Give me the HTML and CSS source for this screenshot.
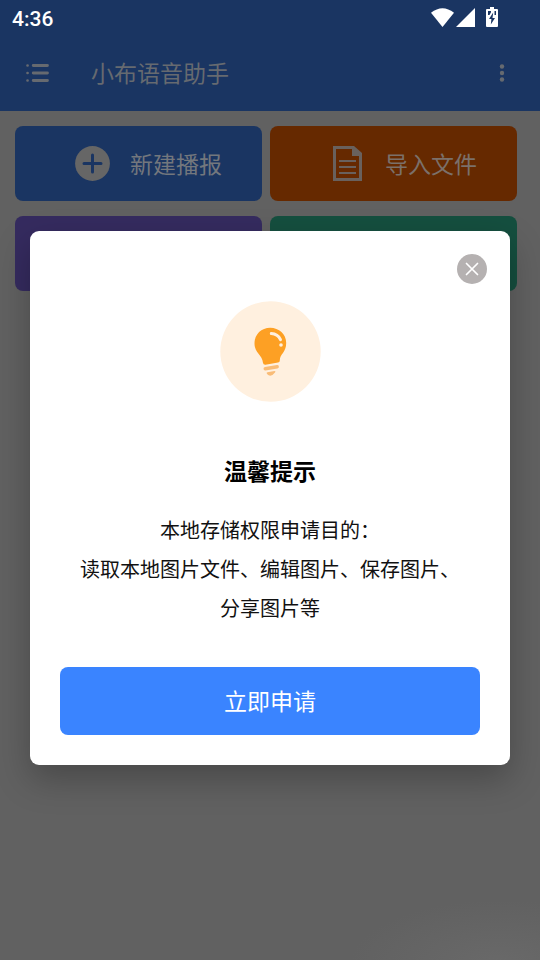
FILE: index.html
```html
<!DOCTYPE html>
<html lang="zh-CN">
<head>
<meta charset="utf-8">
<title>小布语音助手</title>
<link rel="stylesheet" href="styles.css">
</head>
<body>
<header class="header">
  <div class="status">
    <span class="time">4:36</span>
    <svg class="signals" width="70" height="24" viewBox="0 0 70 24">
      <path d="M1 6.800Q12.500-2.500 24 6.800L12.500 21Z"/>
      <path d="M26 21L45 2v19Z"/>
      <path d="M57 3h3V1h4v2h3q1 0 1 1v16q0 1-1 1H57q-1 0-1-1V4q0-1 1-1Z"/>
      <g fill="#1a3562">
        <path d="M63.200 6.500L59 13h2.400L60.800 18.500 65 12h-2.500Z"/>
        <path d="M58 5h3v1.200L59.500 9H58ZM64.500 5H66v4h-1.500Z"/>
      </g>
    </svg>
  </div>
  <div class="toolbar">
    <svg class="menu" width="24" height="20" viewBox="0 0 24 20">
      <path d="M7.200 2.500h14.300M7.200 10h14.300M7.200 17.500h14.300" stroke-width="2.800" stroke-linecap="round"/>
      <path d="M1.500 2.500h.1M1.500 10h.1M1.500 17.500h.1" stroke-width="2.600" stroke-linecap="round"/>
    </svg>
    <h1 class="title">小布语音助手</h1>
    <svg class="more" width="6" height="20" viewBox="0 0 6 20">
      <circle cx="3" cy="3.500" r="2.200"/><circle cx="3" cy="10" r="2.200"/><circle cx="3" cy="16.500" r="2.200"/>
    </svg>
  </div>
</header>
<main class="grid">
  <div class="tile blue">
    <svg width="35" height="35" viewBox="0 0 35 35">
      <circle cx="17.500" cy="17.500" r="17.400" fill="#666"/>
      <path d="M17.500 9v17M9 17.500h17" stroke="#1a3562" stroke-width="3" stroke-linecap="round"/>
    </svg>
    <span>新建播报</span>
  </div>
  <div class="tile orange">
    <svg width="35" height="35" viewBox="0 0 35 35">
      <path d="M23 1.500H4.500v32h26V9" fill="none" stroke="#69615d" stroke-width="3"/>
      <path d="M22 0h2l8 7v3H22Z" fill="#69615d"/>
      <path d="M9 15h17M9 21h17M9 27h17" stroke="#69615d" stroke-width="2.200"/>
    </svg>
    <span>导入文件</span>
  </div>
  <div class="tile purple"></div>
  <div class="tile green"></div>
</main>
<section class="dialog" role="dialog">
  <svg class="close" width="30" height="30" viewBox="0 0 30 30">
    <circle cx="15" cy="15" r="15" fill="#b5b1b1"/>
    <path d="M9.500 9.500l11 11M20.500 9.500l-11 11" stroke="#fff" stroke-width="1.700" stroke-linecap="round"/>
  </svg>
  <svg class="bulb" width="102" height="102" viewBox="0 0 102 102">
    <circle cx="51.500" cy="50.500" r="50.200" fill="#fff0df"/>
    <path d="M43.900 61.500C43.500 54 35.500 52 35.500 42.500C35.500 33 42.500 26.700 51.200 26.700S67.200 33 67.200 42C67.200 51.500 60.800 53 60.800 59.500Q60.800 61.300 59 61.600L46.500 63.800Q44.200 64 43.900 61.500Z" fill="#fda024"/>
    <path d="M52.300 32.500Q58.800 32.800 61.500 38.600" fill="none" stroke="#fff0df" stroke-width="3" stroke-linecap="round"/>
    <circle cx="62" cy="44" r="1.800" fill="#fff0df"/>
    <path d="M46.200 67.800L58.200 65.800" stroke="#f9bc77" stroke-width="3.400" stroke-linecap="round"/>
    <path d="M48.500 71.200L55.500 70Q57.300 70 56 71.500Q51.800 77 48 73Q47 71.500 48.500 71.200Z" fill="#f9bc77"/>
  </svg>
  <h2 class="heading">温馨提示</h2>
  <p class="message">本地存储权限申请目的：<br>读取本地图片文件、编辑图片、保存图片、<br>分享图片等</p>
  <button class="apply">立即申请</button>
</section>
</body>
</html>
```
FILE: styles.css
```css
* { box-sizing: border-box; }
body {
  margin: 0;
  width: 540px;
  height: 960px;
  overflow: hidden;
  position: relative;
  background: radial-gradient(ellipse 150px 65px at 500px 965px, #696969, #616161) #616161;
  font-family: "Noto Sans CJK SC", sans-serif;
}
.header { height: 111px; background: #1a3562; }
.status {
  height: 36px;
  padding: 0 40px 0 12px;
  display: flex;
  justify-content: space-between;
  align-items: center;
}
.time { color: #fff; font: 500 21px/36px Roboto, sans-serif; padding-top: 2px; }
.signals { fill: #fff; }
.toolbar { height: 75px; display: flex; align-items: center; padding: 0 35px 1px 26px; }
.menu { fill: none; stroke: #666a70; }
.title { margin: -2px 0 0 41px; font-size: 23px; font-weight: 400; line-height: 34px; color: #666a70; }
.more { margin-left: auto; fill: #666a70; }
.grid { display: grid; grid-template-columns: 247px 247px; gap: 15px 8px; padding: 15px; }
.tile {
  height: 75px;
  border-radius: 8px;
  display: flex;
  align-items: center;
  gap: 20px;
  padding-left: 60px;
  font-size: 23px;
  line-height: 34px;
  color: #73777d;
}
.tile span { padding-bottom: 2px; }
.blue { background: #1a3562; }
.orange { background: #662900; color: #7b706a; }
.purple { background: #352b5f; }
.green { background: #154f3f; }
.dialog {
  position: absolute;
  left: 30px;
  top: 231px;
  width: 480px;
  height: 534px;
  border-radius: 9px;
  background: #fff;
  box-shadow: 0 14px 34px rgba(0, 0, 0, .26);
  padding: 70px 30px 30px;
  display: flex;
  flex-direction: column;
  align-items: center;
}
.close { position: absolute; right: 23px; top: 23px; }
.bulb { flex: none; }
.heading { margin: 49px 0 0; font-size: 23px; font-weight: 700; line-height: 36px; color: #000; }
.message { margin: 22px 0 0; font-size: 20px; line-height: 39px; color: #111; text-align: center; white-space: nowrap; }
.apply {
  width: 420px;
  height: 68px;
  margin-top: auto;
  padding: 0 0 2px;
  border: 0;
  border-radius: 8px;
  background: #3a84ff;
  color: #fff;
  font: 400 23px/34px "Noto Sans CJK SC", sans-serif;
}
```
